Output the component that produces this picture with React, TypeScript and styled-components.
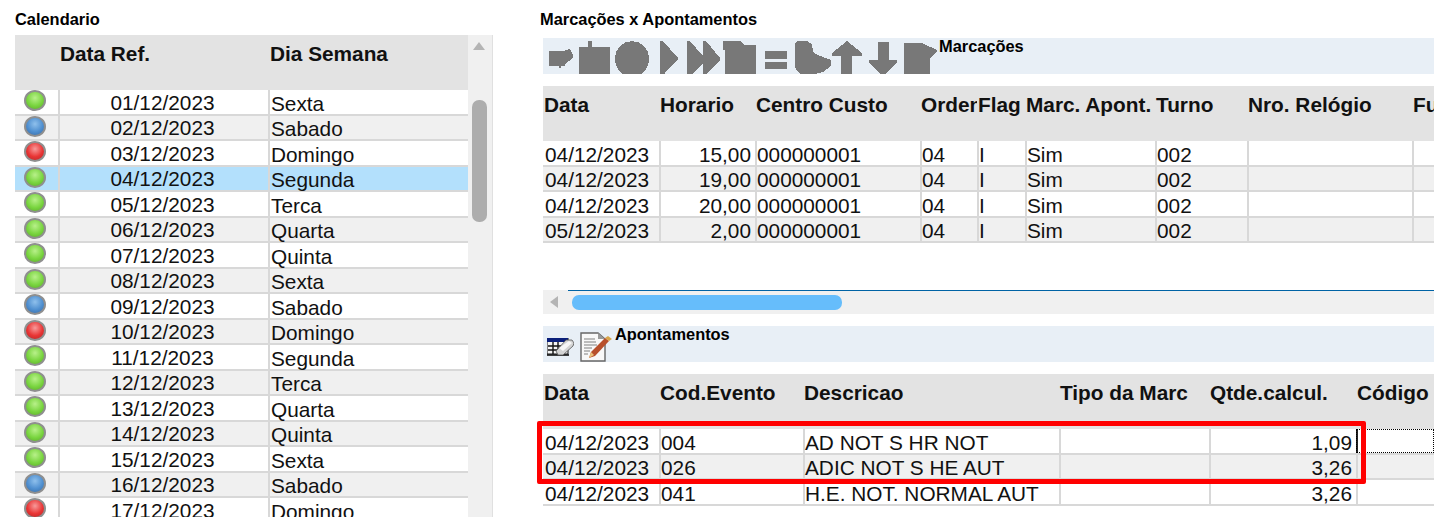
import { createGlobalStyle, styled } from 'styled-components';

const GlobalStyle = createGlobalStyle`
    html, body {
        margin: 0;
        padding: 0;
        background: #ffffff;
    }
    body {
        font-family: "Liberation Sans", Arial, sans-serif;
        color: #111111;
    }
`

type Align = 'left' | 'center' | 'right';
type Column = { title: string; align?: Align };
type DotColor = 'green' | 'blue' | 'red';

const CALENDAR_COLS = '43px 210px 200px';
const MARCACOES_COLS = '116px 96px 165px 57px 48px 130px 92px 165px 1fr';
const APONTAMENTOS_COLS = '116px 144px 256px 150px 147px 1fr';

const marcacoesColumns: Column[] = [
    { title: 'Data' },
    { title: 'Horario', align: 'right' },
    { title: 'Centro Custo' },
    { title: 'Orden' },
    { title: 'Flag' },
    { title: 'Marc. Apont.' },
    { title: 'Turno' },
    { title: 'Nro. Relógio' },
    { title: 'Funcionario' },
];

const marcacoes = [
    ['04/12/2023', '15,00', '000000001', '04', 'I', 'Sim', '002', '', ''],
    ['04/12/2023', '19,00', '000000001', '04', 'I', 'Sim', '002', '', ''],
    ['04/12/2023', '20,00', '000000001', '04', 'I', 'Sim', '002', '', ''],
    ['05/12/2023', '2,00', '000000001', '04', 'I', 'Sim', '002', '', ''],
];

const apontamentosColumns: Column[] = [
    { title: 'Data' },
    { title: 'Cod.Evento' },
    { title: 'Descricao' },
    { title: 'Tipo da Marc' },
    { title: 'Qtde.calcul.', align: 'right' },
    { title: 'Código' },
];

const apontamentos = [
    ['04/12/2023', '004', 'AD NOT S HR NOT', '', '1,09', ''],
    ['04/12/2023', '026', 'ADIC NOT S HE AUT', '', '3,26', ''],
    ['04/12/2023', '041', 'H.E. NOT. NORMAL AUT', '', '3,26', ''],
];

const WEEK = ['Sexta', 'Sabado', 'Domingo', 'Segunda', 'Terca', 'Quarta', 'Quinta'];

const calendario = Array.from({ length: 17 }, (_, index) => {
    const day = WEEK[index % 7];
    const dot: DotColor = day === 'Sabado' ? 'blue' : day === 'Domingo' ? 'red' : 'green';
    return { date: `${String(index + 1).padStart(2, '0')}/12/2023`, day, dot };
});

function GrayToolbarIcons() {
    return (
        <svg width="396" height="36" viewBox="0 0 396 36" fill="#787878" shapeRendering="crispEdges" style={{ flex: 'none' }}>
            <path d="M6 13H20L27 11L30 17V20L22 26V28H18V30H16V28H6Z" />
            <path d="M36 9H45V3H49V9H67V36H36Z" />
            <path d="M89 3C99 3 106 11 106 20C106 27 103 32 99 36H79C75 32 72 27 72 20C72 11 79 3 89 3Z" />
            <path d="M117 3H120L135 20V22L122 34V36H117Z" />
            <path d="M144 3H147L160 18V3H163L177 20V22L163 36H160V25L150 36H144Z" />
            <path d="M180 3H197L201 7H213V36H182V12H180Z" />
            <path d="M222 13H244V21H222ZM222 24H244V31H222Z" />
            <path d="M254 3H264L269 6L270 14L275 17L288 22V28L280 34L272 36H258L253 32L252 28V6Z" />
            <path d="M304 3L319 15V18H309V36H298V18H289V15Z" />
            <path d="M335 4H346V22H354V25L342 36H338L326 25V22H335Z" />
            <path d="M361 5H379L394 12V14L387 20V36H361Z" />
        </svg>
    );
}

function EraserGridIcon() {
    return (
        <IconSlot $left={4} $top={12}>
            <svg width="27" height="18" viewBox="0 0 27 18">
                <rect x="0" y="0" width="21" height="16" fill="#f4f4f4" stroke="#111" strokeWidth="1" />
                <rect x="0" y="0" width="21" height="4" fill="#0a1f7a" />
                <path d="M1 8H14M1 12H12M6 4V16M11 4V16" stroke="#111" strokeWidth="1.4" />
                <path d="M0 17H22" stroke="#111" strokeWidth="1.6" />
                <path d="M9 13L19 2H25L27 5L26 8L16 17H11Z" fill="#d4d4d4" stroke="#555" strokeWidth="0.8" />
                <path d="M12 10L22 3L25 5L16 13Z" fill="#f7f7f7" />
            </svg>
        </IconSlot>
    );
}

function NotePencilIcon() {
    return (
        <IconSlot $left={6} $top={6}>
            <svg width="32" height="30" viewBox="0 0 32 30">
                <path d="M1 1H18L25 7V29H1Z" fill="#f8f8f8" stroke="#666" strokeWidth="1.4" />
                <path d="M18 1V7H25Z" fill="#9a9a9a" />
                <path d="M4 7H15M4 10H16M4 13H17M4 16H12M4 19H10M4 22H8" stroke="#a8a8a8" strokeWidth="1.5" />
                <path d="M9 26L11 20L25 6L29 9L15 24Z" fill="#b8502c" />
                <path d="M9 26L11 20L14 23Z" fill="#e9c17a" />
                <path d="M25 6L28 4L32 7L29 9Z" fill="#d8a54a" />
            </svg>
        </IconSlot>
    );
}

function App() {
    return (
        <Page>
            <GlobalStyle />
            <LeftPanel>
                <Title>Calendario</Title>
                <CalendarFrame>
                    <CalendarTable>
                        <HeaderRow $cols={CALENDAR_COLS}>
                            <HeaderCell />
                            <HeaderCell $inset={2}>Data Ref.</HeaderCell>
                            <HeaderCell $inset={2}>Dia Semana</HeaderCell>
                        </HeaderRow>
                        {calendario.map((item, index) => (
                            <Row key={item.date} $cols={CALENDAR_COLS} $alt={index % 2 === 1} $selected={index === 3}>
                                <DotCell><Dot $color={item.dot} /></DotCell>
                                <Cell $align="center" $nudge={2.5}>{item.date}</Cell>
                                <Cell $nudge={3.5} $inset={1}>{item.day}</Cell>
                            </Row>
                        ))}
                    </CalendarTable>
                    <VerticalBar>
                        <ArrowUp />
                        <VerticalThumb />
                    </VerticalBar>
                </CalendarFrame>
            </LeftPanel>

            <RightPanel>
                <Title>Marcações x Apontamentos</Title>
                <Section>
                    <Toolbar>
                        <GrayToolbarIcons />
                        <ToolbarLabel>Marcações</ToolbarLabel>
                    </Toolbar>
                    <HeaderRow $cols={MARCACOES_COLS} $spaced>
                        {marcacoesColumns.map(col => <HeaderCell key={col.title}>{col.title}</HeaderCell>)}
                    </HeaderRow>
                    <UpperBody>
                        {marcacoes.map((row, index) => (
                            <Row key={index} $cols={MARCACOES_COLS} $alt={index % 2 === 1}>
                                {row.map((value, i) => (
                                    <Cell key={i} $align={marcacoesColumns[i].align} $nudge={3.5}>{value}</Cell>
                                ))}
                            </Row>
                        ))}
                    </UpperBody>
                    <HorizontalBar>
                        <ArrowLeft />
                        <HorizontalThumb />
                    </HorizontalBar>
                </Section>

                <LowerSection>
                    <Toolbar>
                        <EraserGridIcon />
                        <NotePencilIcon />
                        <ToolbarLabel $left={3}>Apontamentos</ToolbarLabel>
                    </Toolbar>
                    <LowerTable>
                        <HeaderRow $cols={APONTAMENTOS_COLS}>
                            {apontamentosColumns.map(col => <HeaderCell key={col.title}>{col.title}</HeaderCell>)}
                        </HeaderRow>
                        {apontamentos.map((row, index) => (
                            <Row key={index} $cols={APONTAMENTOS_COLS} $alt={index % 2 === 1}>
                                {row.map((value, i) => (
                                    <Cell key={i} $align={apontamentosColumns[i].align} $nudge={3.5} $focused={index === 0 && i === 5}>{value}</Cell>
                                ))}
                            </Row>
                        ))}
                        <Highlight />
                    </LowerTable>
                </LowerSection>
            </RightPanel>
        </Page>
    );
}

const Page = styled.div`
    width: 1434px;
    height: 517px;
    display: flex;
    overflow: hidden;
    background: #ffffff;
`
const LeftPanel = styled.div`
    width: 478px;
    margin-left: 15px;
    flex: none;
`
const RightPanel = styled.div`
    flex: 1;
    min-width: 0;
    margin-left: 47px;
`
const Title = styled.div`
    height: 35px;
    padding-top: 11px;
    box-sizing: border-box;
    font-size: 16.4px;
    line-height: 17px;
    font-weight: 700;
    color: #000000;
`
const CalendarFrame = styled.div`
    display: flex;
    align-items: stretch;
    height: 482px;
`
const CalendarTable = styled.div`
    width: 453px;
    flex: none;
`
const HeaderRow = styled.div<{ $cols: string; $spaced?: boolean }>`
    display: grid;
    grid-template-columns: ${props => props.$cols};
    height: 55px;
    margin-top: ${props => (props.$spaced ? '12px' : '0')};
    background: #e3e3e3;
`
const HeaderCell = styled.div<{ $inset?: number }>`
    padding: 7px 0 0 ${props => props.$inset ?? 1}px;
    font-size: 20.8px;
    line-height: 24px;
    font-weight: 700;
    white-space: nowrap;
    overflow: hidden;
    color: #111111;
`
const Row = styled.div<{ $cols: string; $alt?: boolean; $selected?: boolean }>`
    display: grid;
    grid-template-columns: ${props => props.$cols};
    height: 25.5px;
    box-sizing: border-box;
    border-bottom: 2px solid #d8d8d8;
    background: ${props => (props.$selected ? '#b3e0fc' : props.$alt ? '#f0f0f0' : '#ffffff')};
`
const Cell = styled.div<{ $align?: Align; $focused?: boolean; $nudge?: number; $inset?: number }>`
    min-width: 0;
    box-sizing: border-box;
    padding-top: ${props => props.$nudge ?? 0}px;
    padding-left: ${props => props.$inset ?? 0}px;
    padding-right: ${props => (props.$align === 'right' ? 4 : 3)}px;
    font-size: 20.8px;
    line-height: 20px;
    white-space: nowrap;
    color: #111111;
    text-align: ${props => props.$align ?? 'left'};
    &:first-child {
        padding-left: 2px;
    }
    &:not(:first-child) {
        border-left: 2px solid #d8d8d8;
    }
    ${props => props.$focused && `
        outline: 1px dotted #000000;
        outline-offset: -1px;
        &:not(:first-child) {
            border-left: 2px solid #222222;
        }
    `}
`
const DotCell = styled.div`
    padding-left: 9px;
`
const DOT_COLORS: Record<DotColor, { light: string; mid: string; dark: string }> = {
    green: { light: '#b8f08a', mid: '#79d53f', dark: '#5aa52c' },
    blue: { light: '#8fc0ec', mid: '#4f8fd0', dark: '#39699f' },
    red: { light: '#f79a9a', mid: '#e93434', dark: '#ad2a2a' },
};
const Dot = styled.span<{ $color: DotColor }>`
    display: block;
    width: 22px;
    height: 21px;
    box-sizing: border-box;
    border-radius: 50%;
    border: 2px solid #8f8f8f;
    background: radial-gradient(
        circle at 50% 35%,
        ${props => DOT_COLORS[props.$color].light} 0%,
        ${props => DOT_COLORS[props.$color].mid} 55%,
        ${props => DOT_COLORS[props.$color].dark} 100%
    );
`
const VerticalBar = styled.div`
    width: 25px;
    flex: none;
    box-sizing: border-box;
    padding: 7px 0 0 4px;
    background: #f0f0f0;
    border-right: 1px solid #e0e0e0;
`
const ArrowUp = styled.div`
    width: 0;
    height: 0;
    margin-left: 1px;
    border-left: 6px solid transparent;
    border-right: 6px solid transparent;
    border-bottom: 8px solid #b4b4b4;
`
const VerticalThumb = styled.div`
    width: 15px;
    height: 122px;
    margin-top: 50px;
    border-radius: 7px;
    background: #adadad;
`
const Section = styled.div`
    padding-left: 3px;
    padding-top: 3px;
`
const LowerSection = styled(Section)`
    margin-top: 9px;
`
const Toolbar = styled.div`
    display: flex;
    align-items: flex-start;
    height: 36px;
    overflow: hidden;
    background: #e8eff6;
`
const ToolbarLabel = styled.span<{ $left?: number }>`
    margin-left: ${props => props.$left ?? 0}px;
    font-size: 16.4px;
    line-height: 17px;
    font-weight: 700;
    color: #000000;
`
const IconSlot = styled.span<{ $left: number; $top: number }>`
    display: block;
    flex: none;
    height: 100%;
    margin-left: ${props => props.$left}px;
    padding-top: ${props => props.$top}px;
    box-sizing: border-box;
    svg {
        display: block;
    }
`
const UpperBody = styled.div`
    height: 149px;
`
const HorizontalBar = styled.div`
    position: relative;
    display: flex;
    align-items: center;
    height: 24px;
    padding-left: 7px;
    background: #f0f0f0;
    &::before {
        content: '';
        position: absolute;
        left: 25px;
        right: 0;
        top: 0;
        height: 1px;
        background: #0063a5;
    }
`
const ArrowLeft = styled.div`
    width: 0;
    height: 0;
    border-top: 6px solid transparent;
    border-bottom: 6px solid transparent;
    border-right: 8px solid #b4b4b4;
`
const HorizontalThumb = styled.div`
    width: 270px;
    height: 15px;
    margin-left: 14px;
    border-radius: 7px;
    background: #66bdfb;
`
const LowerTable = styled.div`
    position: relative;
    margin-top: 12px;
`
const Highlight = styled.div`
    position: absolute;
    left: -6px;
    top: 47px;
    width: 829px;
    height: 63px;
    box-sizing: border-box;
    border: 5px solid #ff0000;
    border-radius: 2px;
    pointer-events: none;
`

export default App;
